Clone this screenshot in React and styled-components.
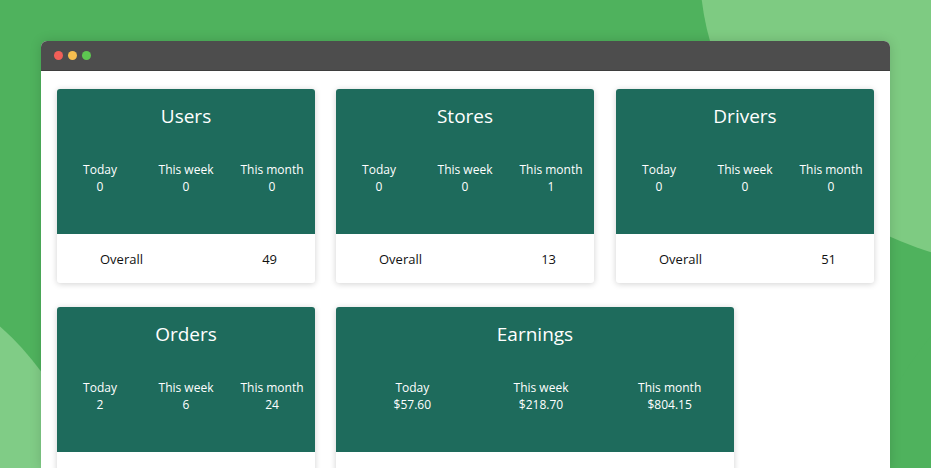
import React from "react";
import styled, { createGlobalStyle } from "styled-components";

const Global = createGlobalStyle`
  html,body{margin:0;padding:0;}
  body{width:931px;height:468px;overflow:hidden;background:#4caf5a;font-family:"Open Sans","Noto Sans",sans-serif;}
`;
const Page = styled.div`position:relative;width:931px;height:468px;overflow:hidden;background:#4fb25d;padding:41px 41px 0;box-sizing:border-box;`;
const Blob = styled.div`position:absolute;border-radius:50%;background:${p=>p.c};`;
const Win = styled.div`position:relative;z-index:1;width:849px;height:427px;background:#fff;border-radius:6px 6px 0 0;overflow:hidden;box-shadow:0 0 12px rgba(0,0,0,.15);`;
const Bar = styled.div`height:29px;background:#4d4d4d;display:flex;align-items:center;gap:5px;padding-left:13px;border-bottom:1px solid #3e3e3e;`;
const Dot = styled.span`width:9px;height:9px;border-radius:50%;background:${p=>p.c};`;
const Grid = styled.div`display:grid;grid-template-columns:258px 259px 258px;column-gap:21px;row-gap:24px;padding:18px 16px;`;
const Card = styled.div`grid-column:span ${p=>p.span||1};width:${p=>p.w}px;border-radius:3px;overflow:hidden;box-shadow:0 1px 6px rgba(0,0,0,.18);background:#fff;`;
const Head = styled.div`background:#1e6b5c;height:145px;color:#fff;display:flex;flex-direction:column;align-items:center;`;
const Title = styled.div`font-size:19px;margin-top:14px;height:58px;`;
const Stats = styled.div`display:grid;grid-template-columns:repeat(3,1fr);width:100%;padding:${p=>p.pad||0};box-sizing:border-box;`;
const Stat = styled.div`text-align:center;font-size:12px;line-height:17px;font-weight:500;`;
const Foot = styled.div`height:49px;display:flex;align-items:center;justify-content:space-between;padding:0 38px 0 43px;font-size:13px;color:#111;font-weight:500;`;

const Cardx = ({t,v,o,w=258,pad}) => (
  <Card w={w} span={w>300?2:1}>
    <Head>
      <Title>{t}</Title>
      <Stats pad={pad}>
        {["Today","This week","This month"].map((l,i)=>(<Stat key={l}>{l}<br/>{v[i]}</Stat>))}
      </Stats>
    </Head>
    <Foot>{o!==undefined && <><span>Overall</span><span>{o}</span></>}</Foot>
  </Card>
);

export default function App(){
  return (<><Global/>
    <Page>
      <Blob c="#7ecb82" style={{left:700,top:-330,width:700,height:600}}/>
      <Blob c="#4fb25d" style={{left:860,top:230,width:600,height:600}}/>
      <Blob c="#80cc86" style={{left:-500,top:250,width:600,height:600}}/>
      <Win>
        <Bar><Dot c="#f25f58"/><Dot c="#f6be4f"/><Dot c="#5ec751"/></Bar>
        <Grid>
          <Cardx t="Users" v={[0,0,0]} o={49}/>
          <Cardx t="Stores" v={[0,0,1]} o={13}/>
          <Cardx t="Drivers" v={[0,0,0]} o={51}/>
          <Cardx t="Orders" v={[2,6,24]}/>
          <Cardx t="Earnings" w={398} pad="0 0 0 12px" v={["$57.60","$218.70","$804.15"]}/>
        </Grid>
      </Win>
    </Page>
  </>);
}
